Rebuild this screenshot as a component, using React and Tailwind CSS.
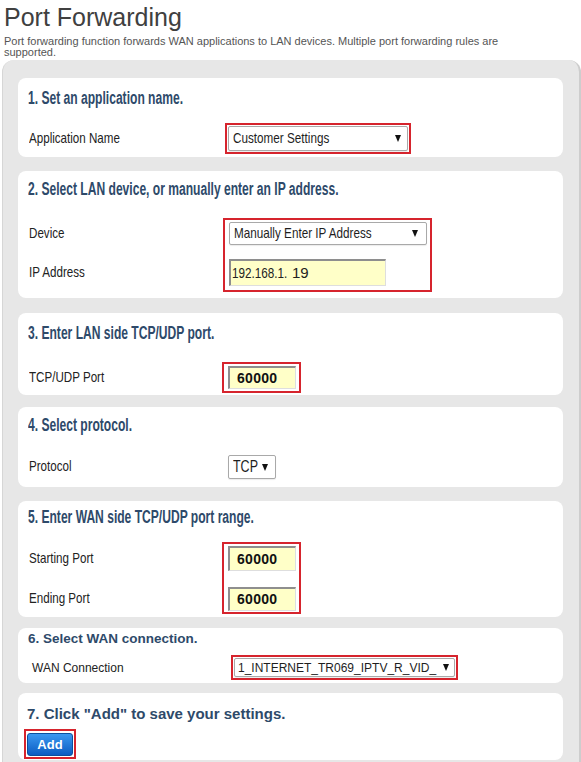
import React from 'react';

const SANS = "font-['Liberation_Sans',Arial,sans-serif]";
// the form text in steps 1-5 is a condensed face; squeeze Liberation Sans to match
const SQ = 'inline-block origin-left scale-x-[0.78] whitespace-nowrap';
const SQ_HEAD = 'inline-block origin-left scale-x-[0.69] whitespace-nowrap';
const SQ_LABEL = 'inline-block origin-left scale-x-[0.8] whitespace-nowrap';

function Card({ className = '', children }) {
  return <div className={`bg-white rounded-[8px] shrink-0 ${className}`}>{children}</div>;
}

function Heading({ children }) {
  return (
    <h2 className="pl-[10px] text-[17.5px] leading-[20px] font-bold text-[#2e4a6a]">
      <span className={SQ_HEAD}>{children}</span>
    </h2>
  );
}

function Label({ className = '', children }) {
  return (
    <div className={`pl-[11px] text-[14.5px] text-[#222] shrink-0 ${className}`}>
      <span className={SQ_LABEL}>{children}</span>
    </div>
  );
}

function RedBox({ className = '', children }) {
  return <div className={`border-2 border-[#d6242d] shrink-0 ${className}`}>{children}</div>;
}

function Arrow() {
  return (
    <svg width="6" height="7" viewBox="0 0 6 7" className="shrink-0 ml-auto">
      <polygon points="0,0 6,0 3,7" fill="#111" />
    </svg>
  );
}

function Select({ className = '', squeeze = true, children }) {
  return (
    <div
      className={`flex items-center bg-white border border-[#a9a9a9] rounded-[2px] text-[#1e1e1e] shadow-[0_1px_1px_rgba(0,0,0,0.08)] ${className}`}
    >
      <div className="flex-1 min-w-0 overflow-hidden whitespace-nowrap">
        <span className={squeeze ? SQ : 'whitespace-nowrap'}>{children}</span>
      </div>
      <Arrow />
    </div>
  );
}

function YellowInput({ className = '', children }) {
  return (
    <div
      className={`flex items-center bg-[#ffffc8] border-t-2 border-l-2 border-r border-b border-t-[#8e8e8e] border-l-[#8e8e8e] border-r-[#dedede] border-b-[#dedede] ${className}`}
    >
      {children}
    </div>
  );
}

function Port({ className = '' }) {
  return (
    <YellowInput className={`w-[68px] pl-[7px] ${className}`}>
      <span className="text-[14px] font-bold tracking-[0.3px] text-[#111]">60000</span>
    </YellowInput>
  );
}

export default function App() {
  return (
    <div className={`w-[581px] h-[762px] overflow-hidden bg-white ${SANS}`}>
      {/* Page header */}
      <h1 className="pl-[4px] pt-[2px] text-[25px] leading-[30px] text-[#404040]">Port Forwarding</h1>
      <p className="pl-[4px] mt-[4px] w-[540px] text-[11px] leading-[11px] text-[#555]">
        Port forwarding function forwards WAN applications to LAN devices. Multiple port forwarding rules are
        supported.
      </p>

      {/* Grey panel */}
      <div className="mt-[2px] ml-[2px] w-[579px] h-[702px] bg-[#e7e7e7] rounded-t-[12px] border-l border-r-2 border-l-[#d6d6d6] border-r-[#cdcdcd] pl-[15px] pr-[16px] pt-[18px] flex flex-col">
        {/* 1 */}
        <Card className="h-[79px] pt-[10px]">
          <Heading>1. Set an application name.</Heading>
          <div className="flex items-center mt-[15px]">
            <Label className="w-[207px]">Application Name</Label>
            <RedBox className="p-[1px]">
              <Select className="w-[180px] h-[25px] pl-[4px] pr-[6px] text-[15px]">Customer Settings</Select>
            </RedBox>
          </div>
        </Card>

        {/* 2 */}
        <Card className="h-[127px] pt-[8px] mt-[14px]">
          <Heading>2. Select LAN device, or manually enter an IP address.</Heading>
          <div className="flex mt-[19px]">
            <div className="w-[205px] pt-[4px] flex flex-col shrink-0">
              <Label className="h-[23px] flex items-center">Device</Label>
              <Label className="h-[27px] mt-[14px] flex items-center">IP Address</Label>
            </div>
            <RedBox className="w-[209px] pt-[2px] pb-[4px] pl-[4px] pr-[3px] flex flex-col">
              <Select className="w-full h-[23px] pl-[4px] pr-[8px] text-[15px]">Manually Enter IP Address</Select>
              <YellowInput className="mt-[14px] h-[27px] w-[157px] pl-[1px]">
                <span className="w-[57px] shrink-0 text-[15px] text-[#222]">
                  <span className={SQ}>192.168.1.</span>
                </span>
                <span className="text-[15px] text-[#222] ml-[3px]">19</span>
              </YellowInput>
            </RedBox>
          </div>
        </Card>

        {/* 3 */}
        <Card className="h-[82px] pt-[10px] mt-[15px]">
          <Heading>3. Enter LAN side TCP/UDP port.</Heading>
          <div className="flex items-center mt-[19px]">
            <Label className="w-[204px]">TCP/UDP Port</Label>
            <RedBox className="pl-[4px] pr-[3px] py-[2px]">
              <Port className="h-[23px]" />
            </RedBox>
          </div>
        </Card>

        {/* 4 */}
        <Card className="h-[80px] pt-[8px] mt-[12px]">
          <Heading>4. Select protocol.</Heading>
          <div className="flex items-center mt-[20px]">
            <Label className="w-[210px]">Protocol</Label>
            <Select className="w-[48px] h-[24px] pl-[4px] pr-[7px] text-[16px]">TCP</Select>
          </div>
        </Card>

        {/* 5 */}
        <Card className="h-[116px] pt-[6px] mt-[14px]">
          <Heading>5. Enter WAN side TCP/UDP port range.</Heading>
          <div className="flex mt-[15px]">
            <div className="w-[204px] pt-[4px] flex flex-col shrink-0">
              <Label className="h-[25px] flex items-center">Starting Port</Label>
              <Label className="h-[24px] mt-[16px] flex items-center">Ending Port</Label>
            </div>
            <RedBox className="pl-[4px] pr-[3px] pt-[2px] pb-[1px] flex flex-col">
              <Port className="h-[25px]" />
              <Port className="h-[24px] mt-[16px]" />
            </RedBox>
          </div>
        </Card>

        {/* 6 */}
        <Card className="h-[55px] pt-[3px] mt-[11px]">
          <h2 className="pl-[10px] text-[13.5px] leading-[16px] font-bold text-[#2e4a6a]">6. Select WAN connection.</h2>
          <div className="flex items-center mt-[8px]">
            <div className="w-[213px] pl-[14px] text-[12px] text-[#222] shrink-0">WAN Connection</div>
            <RedBox className="p-[1px]">
              <Select squeeze={false} className="w-[221px] h-[19px] pl-[3px] pr-[5px] text-[12px]">
                1_INTERNET_TR069_IPTV_R_VID_
              </Select>
            </RedBox>
          </div>
        </Card>

        {/* 7 */}
        <Card className="h-[67px] pt-[12px] mt-[10px]">
          <h2 className="pl-[9px] text-[15px] leading-[18px] font-bold text-[#2e4a6a]">
            7. Click "Add" to save your settings.
          </h2>
          <div className="mt-[6px] pl-[6px] flex">
            <RedBox className="p-[1px]">
              <button className="w-[46px] h-[23px] rounded-[3px] border border-[#0a4f9e] bg-gradient-to-b from-[#3a98f0] to-[#0a5cc2] text-white text-[13px] font-bold leading-none">
                Add
              </button>
            </RedBox>
          </div>
        </Card>
      </div>
    </div>
  );
}
